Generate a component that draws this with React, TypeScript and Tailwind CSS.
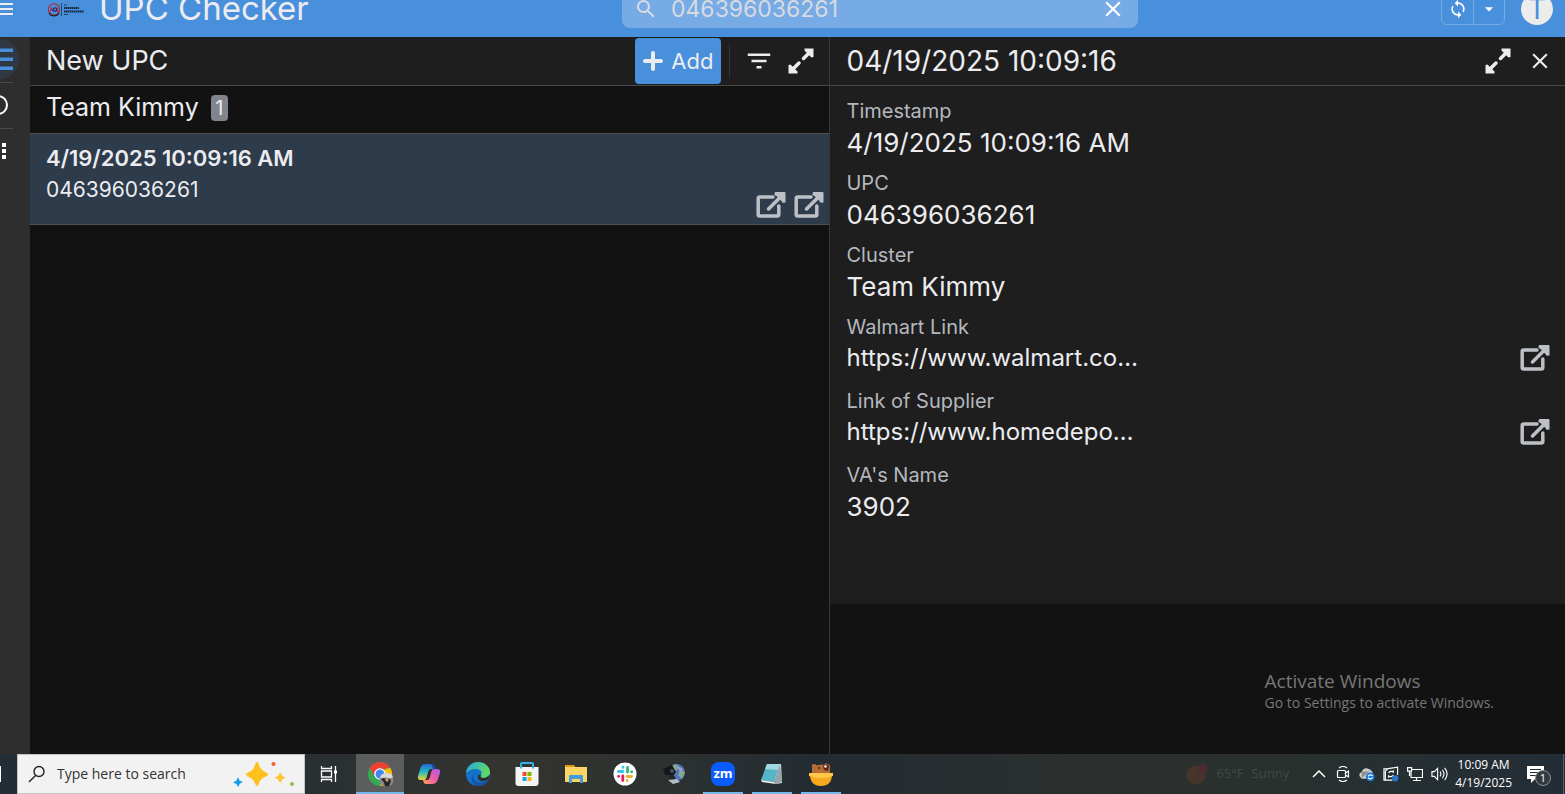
import React from 'react';
import { MdFilterList, MdSearch, MdClose, MdSync, MdArrowDropDown } from 'react-icons/md';
import { clsx } from 'clsx';

interface Field {
  label: string;
  value: string;
  isLink?: boolean;
}

const fields: Field[] = [
  { label: 'Timestamp', value: '4/19/2025 10:09:16 AM' },
  { label: 'UPC', value: '046396036261' },
  { label: 'Cluster', value: 'Team Kimmy' },
  { label: 'Walmart Link', value: 'https://www.walmart.co…', isLink: true },
  { label: 'Link of Supplier', value: 'https://www.homedepo…', isLink: true },
  { label: "VA's Name", value: '3902' },
];

const ExternalIcon = () => (
  <svg width="30" height="28" viewBox="0 0 30 28" fill="none" stroke="currentColor" strokeWidth="3.5">
    <path d="M17 6H3.800Q2.200 6 2.200 7.500v16Q2.200 25 3.800 25h17.400q1.600 0 1.600-1.500V15" strokeLinejoin="round" strokeLinecap="round" />
    <path d="M12.500 18 25 5.500" strokeLinecap="round" />
    <path d="M19 1h9.500q1 0 1 1v9.500l-3 .3L25.500 10 20.500 5 18.300 4z" fill="currentColor" stroke="none" />
  </svg>
);

const ExpandIcon = () => (
  <svg width="26" height="26" viewBox="0 0 26 26">
    <path d="M5 21 11 15M15.500 10.500 21 5" stroke="currentColor" strokeWidth="3.500" strokeLinecap="round" />
    <path d="M16.500.5h9V9l-2 .5-7-7zM9.500 25.500h-9V17l2-.5 7 7z" fill="currentColor" />
  </svg>
);

const PlusIcon = () => (
  <svg width="20" height="20" viewBox="0 0 20 20" fill="none" stroke="currentColor" strokeWidth="4" strokeLinecap="round">
    <path d="M10 2v16M2 10h16" />
  </svg>
);

const Header = () => (
  <header className="flex h-[37px] shrink-0 items-end overflow-hidden bg-[#4890dc] text-[#ececf0]">
    <div className="grid h-14 w-full shrink-0 grid-cols-[622fr_516fr_427fr] items-center">
      <div className="flex items-center">
        <button aria-label="Menu" className="h-[14px] w-[13px]">
          <svg width="13" height="14" viewBox="0 0 13 14" fill="currentColor">
            <path d="M0 1h13v2H0zM0 6h13v2H0zM0 11h13v2H0z" />
          </svg>
        </button>
        <svg className="ml-[34px]" width="38" height="15" viewBox="0 0 38 15">
          <circle cx="7" cy="7.500" r="5.700" fill="none" stroke="#a8304d" strokeWidth="1.200" />
          <path d="M2 11a5.700 5.700 0 0 0 10 0" fill="none" stroke="#20242e" strokeWidth="1.200" />
          <path d="M3 9.500 4.500 6 6 9.500M10.500 5.500v4h2" fill="none" stroke="#b92847" strokeWidth="1.200" />
          <circle cx="8" cy="7.500" r="1.700" fill="none" stroke="#19366f" strokeWidth="1.300" />
          <path d="M14.500 1v13" stroke="#26374d" strokeWidth=".8" />
          <path d="M17 3h3M17 12.500h4" stroke="#253b59" strokeWidth="1.200" />
          <path d="M17 6h15M17 9.500h20" stroke="#1a2a40" strokeWidth="2.200" strokeDasharray="1.600 .4" />
        </svg>
        <h1 className="ml-[14px] pb-[2px] text-[33px] leading-10">UPC Checker</h1>
      </div>
      <div className="flex h-[38px] items-center rounded-lg bg-[#76abe5] px-3">
        <MdSearch size={24} className="shrink-0 text-[#d8dce6]" />
        <input
          aria-label="Search"
          defaultValue="046396036261"
          className="ml-[13px] min-w-0 flex-1 bg-transparent text-[23px] leading-7 text-[#d8dae2] outline-none"
        />
        <button aria-label="Clear search"><MdClose size={26} color="#fff" /></button>
      </div>
      <div className="flex items-center justify-end pr-3">
        <div className="relative flex h-8 rounded-md border border-[#76abe5]">
          <button aria-label="Sync" className="flex w-8 items-center justify-center border-r border-[#76abe5]">
            <MdSync size={20} color="#fff" />
          </button>
          <button aria-label="More sync options" className="flex w-[30px] items-center justify-center">
            <MdArrowDropDown size={20} color="#fff" />
          </button>
          <span className="absolute -top-3 -left-2 size-4 rounded-full bg-[#ffa011]" />
        </div>
        <button aria-label="Account" className="ml-4 flex size-8 items-center justify-center rounded-full bg-[#ececec]">
          <span className="text-[28px] leading-8 text-[#4890dc]">T</span>
        </button>
      </div>
    </div>
  </header>
);

const Sidebar = () => (
  <nav className="flex w-[30px] shrink-0 flex-col items-end overflow-hidden bg-[#2e2e2e] pt-[2px] text-white">
    <button aria-label="List view" className="mr-[11px] flex size-10 shrink-0 items-center justify-end rounded-full bg-[#303943] pr-[6px] text-[#4890dc]">
      <svg width="24" height="22" viewBox="0 0 24 22" fill="currentColor">
        <path d="M0 .5h24v3.500H0zM0 9.500h24V13H0zM0 18.500h24V22H0z" />
      </svg>
    </button>
    <div className="mt-[3px] mr-[17px] h-px w-6 shrink-0 bg-[#4a4a4a]" />
    <button aria-label="Chat" className="mt-[12px] mr-[22px] size-5 shrink-0 rounded-full border-2 border-white" />
    <div className="mt-[13px] mr-[17px] h-px w-6 shrink-0 bg-[#4a4a4a]" />
    <button aria-label="More" className="mt-[9px] mr-[14px] shrink-0">
      <svg width="24" height="26" viewBox="0 0 24 26" fill="currentColor">
        <path d="M10 5h4v4h-4zM10 11h4v4h-4zM10 17h4v4h-4z" />
      </svg>
    </button>
  </nav>
);

const ListPanel = () => (
  <section className="min-w-0 flex-[800] border-r border-[#383838] bg-[#121212]">
    <div className="flex h-[49px] items-center border-b border-[#484848] bg-[#1e1e1e] pr-[15px] pl-4">
      <h2 className="flex-1 text-[27px] leading-8">New UPC</h2>
      <button className="flex h-[46px] items-center gap-2 rounded bg-[#4890dc] px-2 text-[22px] text-[#ececf0]">
        <PlusIcon />
        Add
      </button>
      <div className="ml-2 h-8 w-px bg-[#383838]" />
      <button aria-label="Filter" className="ml-[14px]"><MdFilterList size={30} /></button>
      <button aria-label="Expand list" className="ml-[14px]"><ExpandIcon /></button>
    </div>
    <div className="flex h-12 items-center gap-3 border-b border-[#505050] px-4 pb-1">
      <h3 className="pb-[2px] text-[25px] leading-8">Team Kimmy</h3>
      <span className="flex h-[26px] w-[17px] items-center justify-center rounded bg-[#81858c] text-xl">1</span>
    </div>
    <div className="flex h-[91px] items-end border-b border-[#505050] bg-[#2d3b4b] pr-[5px] pl-4">
      <div className="flex-1 self-start pt-2">
        <p className="text-[22px] leading-8 font-semibold">4/19/2025 10:09:16 AM</p>
        <p className="text-[21px] leading-8">046396036261</p>
      </div>
      <div className="flex gap-2 pb-[5px] text-[#bdc1c6]">
        <a href="#walmart" aria-label="Walmart Link"><ExternalIcon /></a>
        <a href="#supplier" aria-label="Link of Supplier"><ExternalIcon /></a>
      </div>
    </div>
  </section>
);

const DetailPanel = () => (
  <section className="relative min-w-0 flex-[735] bg-[#121212]">
    <div className="flex h-[49px] items-center border-b border-[#484848] bg-[#1e1e1e] pr-3 pl-4">
      <h2 className="flex-1 text-[28px] leading-8">04/19/2025 10:09:16</h2>
      <button aria-label="Expand details"><ExpandIcon /></button>
      <button aria-label="Close details" className="ml-4"><MdClose size={26} /></button>
    </div>
    <dl className="flex flex-col gap-2 bg-[#1e1e1e] pt-[11px] pr-[15px] pb-[79px] pl-4">
      {fields.map((field) => (
        <div key={field.label}>
          <dt className="text-[20px] leading-7 text-[#b4b8be]">{field.label}</dt>
          <dd
            className={clsx(
              'flex items-center justify-between',
              field.isLink ? 'h-[38px] pb-1 text-[24px]' : 'h-9 pb-[2px] text-[26px]'
            )}
          >
            {field.value}
            {field.isLink && (
              <a href="#open" aria-label={`Open ${field.label}`} className="text-[#bdc1c6]"><ExternalIcon /></a>
            )}
          </dd>
        </div>
      ))}
    </dl>
    <div className="absolute right-[71px] bottom-[41px] font-['Open_Sans',sans-serif] text-[#777]">
      <p className="text-[19px] leading-6">Activate Windows</p>
      <p className="text-sm leading-5">Go to Settings to activate Windows.</p>
    </div>
  </section>
);

const ChromeIcon = () => (
  <svg width="28" height="28" viewBox="0 0 28 28">
    <circle cx="14" cy="14" r="12" fill="#34a853" />
    <path d="M3.600 8A12 12 0 0 1 24.400 8L14 9.500 9 17z" fill="#ea4335" />
    <path d="M24.400 8A12 12 0 0 1 14 26l4-9.500 1-7.500z" fill="#fbbc05" />
    <circle cx="14" cy="14" r="5.800" fill="#fff" />
    <circle cx="14" cy="14" r="4.500" fill="#4285f4" />
    <circle cx="20.500" cy="20" r="7" fill="#8d8682" />
    <path d="M14 18q1-5 6.500-5t6.500 4l-3 1.500-4-1z" fill="#d9d9d8" />
    <path d="m15 19 3-1 2 1.500 3-1 2 2-2 6h-4l-1-4z" fill="#25262b" />
    <path d="m19 20 2-2 2 2-2 2z" fill="#c79d82" />
  </svg>
);

const CopilotIcon = () => (
  <svg width="24" height="24" viewBox="0 0 24 24">
    <defs>
      <linearGradient id="cpA" x1="0" y1="0" x2="0" y2="1">
        <stop offset="0" stopColor="#2467dc" /><stop offset=".5" stopColor="#27b9c4" /><stop offset="1" stopColor="#f4d52f" />
      </linearGradient>
      <linearGradient id="cpB" x1="1" y1="0" x2="0" y2="1">
        <stop offset="0" stopColor="#a55af0" /><stop offset=".5" stopColor="#ee5ba5" /><stop offset="1" stopColor="#ffa05c" />
      </linearGradient>
    </defs>
    <path d="M9 2h6q2 0 2.500 2l.8 3H14q-2 0-2.600 2l-2 7q-.6 2-2.400 2H4q-4 0-3-4l2.800-9Q5 2 9 2z" fill="url(#cpA)" />
    <path d="M15 22H9q-2 0-2.500-2L6 18h4q2 0 2.600-2l2-7q.6-2 2.400-2h3q4 0 3 4l-2.800 8Q19 22 15 22z" fill="url(#cpB)" />
    <path d="M14 2h1q2 0 2.500 2l.8 3H16z" fill="#1845a8" />
  </svg>
);

const EdgeIcon = () => (
  <svg width="26" height="26" viewBox="0 0 26 26">
    <defs>
      <linearGradient id="edgeA" x1="0" y1="0" x2="1" y2=".3">
        <stop offset="0" stopColor="#27a3e4" /><stop offset="1" stopColor="#5fdb67" />
      </linearGradient>
    </defs>
    <circle cx="13" cy="13" r="12" fill="#1371c8" />
    <path d="M1 12C2 5 7 1 13 1c7 0 12 5 12 10 0 4-3 6-6 6-3 0-4-1-3-3 2-3-1-6-5-6-5 0-8 2-10 4z" fill="url(#edgeA)" />
    <path d="M8 14c0 7 7 10 15 5-2 4-6 6-10 6-6-1-8-7-5-11z" fill="#1554a5" />
    <path d="M16 14q-2 3 3 3 3 0 5-3v4q-4 3-8 2t-3-6z" fill="#2e3130" />
  </svg>
);

const StoreIcon = () => (
  <svg width="24" height="26" viewBox="0 0 24 26">
    <path d="M6 7V3q0-1 1-1h10q1 0 1 1v4" fill="none" stroke="#33b2e8" strokeWidth="2" />
    <path d="M.5 6h23v16q0 3-3 3h-17q-3 0-3-3z" fill="#f4f4f4" />
    <path d="M6 6v1.500M18 6v1.500" stroke="#33b2e8" strokeWidth="2" />
    <path d="M7.500 11h4v4h-4z" fill="#f04e23" /><path d="M12.500 11h4v4h-4z" fill="#7fba00" />
    <path d="M7.500 16h4v4h-4z" fill="#10a4ed" /><path d="M12.500 16h4v4h-4z" fill="#fdb813" />
  </svg>
);

const ExplorerIcon = () => (
  <svg width="22" height="20" viewBox="0 0 22 20">
    <path d="M0 1h9l2 3H0z" fill="#e09b16" />
    <path d="M0 3h22v15H0z" fill="#fbd567" />
    <path d="M4 19v-7q0-1 1-1h12q1 0 1 1v7h-3v-4H7v4z" fill="#459bd9" />
  </svg>
);

const SlackIcon = () => (
  <svg width="24" height="24" viewBox="0 0 24 24">
    <circle cx="12" cy="12" r="11.500" fill="#fff" />
    <g strokeWidth="2.800" strokeLinecap="round">
      <path d="M5.500 9.500H10M10 5.200v.2" stroke="#36c5f0" />
      <path d="M14.500 5.500V10M18.500 9.800h.2" stroke="#2eb67d" />
      <path d="M14 14.500h4.500M14.200 18.500v.2" stroke="#ecb22e" />
      <path d="M9.800 14v4.500M5.500 14.300h.2" stroke="#e01e5a" />
    </g>
  </svg>
);

const WebcamIcon = () => (
  <svg width="24" height="24" viewBox="0 0 24 24">
    <circle cx="14.500" cy="10.500" r="8.500" fill="#5275bd" />
    <path d="M13 2q4 1 3 5l-4 3-3-4zM18 8l5 2-3 7-4-4z" fill="#81a98b" />
    <path d="M15 4l6 3-3 3z" fill="#a89bd0" />
    <path d="m1 7 9-4 4 7-3 4-8-1z" fill="#15171a" />
    <path d="m6 14 5-2 3 5-4 2z" fill="#23252a" />
    <path d="m6 18 9-1 3 3-7 2z" fill="#b8bdc5" />
    <circle cx="10" cy="9" r="2" fill="#4c535b" />
  </svg>
);

const ZoomIcon = () => (
  <span className="flex size-6 items-center justify-center rounded-lg bg-[#0b5cff] pb-px text-[13px] font-bold text-white">zm</span>
);

const NotepadIcon = () => (
  <svg width="24" height="24" viewBox="0 0 24 24">
    <path d="M7 2h14l1 19-6 1z" fill="#dce3e5" />
    <path d="M7 2h13l-6 18-13-2z" fill="#55b5c7" />
    <path d="M7 2h13l-2 6-13-1z" fill="#a0d9df" />
    <path d="m1 18 13 2 2 2-14-2z" fill="#f1f1ea" />
    <path d="m20 2 2 18-6 2-2-2z" fill="#96a4a8" />
  </svg>
);

const BearIcon = () => (
  <svg width="24" height="25" viewBox="0 0 24 25">
    <path d="M3 12V6q-1-4 2-4 2 0 3 1.500Q12 2 15 3q2-3 4-1 3 1 2 5v5z" fill="#b46c34" />
    <path d="m14 4 4-2 2 2-1 5-4-1z" fill="#5d2520" />
    <path d="m15 4 2-1 1 2-2 1z" fill="#fff" />
    <circle cx="10" cy="6" r="1" fill="#342018" />
    <path d="M1 12h22q0 12-11 12T1 12z" fill="#f5aa1d" />
    <path d="M0 11h24v3q-12 4-24 0z" fill="#ffc848" />
  </svg>
);

const apps = [
  { name: 'Google Chrome', icon: <ChromeIcon />, state: 'active' },
  { name: 'Copilot', icon: <CopilotIcon />, state: 'idle' },
  { name: 'Microsoft Edge', icon: <EdgeIcon />, state: 'idle' },
  { name: 'Microsoft Store', icon: <StoreIcon />, state: 'idle' },
  { name: 'File Explorer', icon: <ExplorerIcon />, state: 'idle' },
  { name: 'Slack', icon: <SlackIcon />, state: 'idle' },
  { name: 'Webcam', icon: <WebcamIcon />, state: 'idle' },
  { name: 'Zoom', icon: <ZoomIcon />, state: 'open' },
  { name: 'Notepad', icon: <NotepadIcon />, state: 'open' },
  { name: 'Bear', icon: <BearIcon />, state: 'open' },
];

const TrayIcons = () => (
  <div className="flex items-center gap-2">
    <svg width="16" height="16" viewBox="0 0 16 16" fill="none" stroke="#fff" strokeWidth="1.500"><path d="m2 11 6-6 6 6" /></svg>
    <svg width="16" height="16" viewBox="0 0 16 16" fill="none" stroke="#fff" strokeWidth="1.200">
      <path d="M3.500 4.500h6q1 0 1 1v5q0 1-1 1h-6q-1 0-1-1v-5q0-1 1-1zM10.500 7l3-2v6l-3-2M4 2q4-3 8 0M4 14q4 3 8 0" />
    </svg>
    <svg width="16" height="16" viewBox="0 0 17 16">
      <path d="M1 11q-2-4 2-5 2-6 8-3 3 1 4 5l-5 5H3z" fill="#c9c9c9" />
      <path d="m3 6 8-1-8 7z" fill="#8d8d8d" />
      <circle cx="12" cy="11" r="4.700" fill="#1677d2" />
      <path d="M9.500 10.500q2-3 5-.5M14.500 11.500q-2 3-5 .5" stroke="#fff" fill="none" strokeWidth="1.200" />
    </svg>
    <svg width="16" height="16" viewBox="0 0 17 16" fill="none" stroke="#fff" strokeWidth="1.200">
      <path d="M15.500 9V.7L4 2.500H1v12h9M5 2.500 2.500 5v9" />
      <path d="M6 7q2-3 5-1V4M11 9q-2 3-5 1v2" />
      <circle cx="13" cy="12.500" r="3.300" fill="#2879cc" stroke="none" />
    </svg>
    <svg width="16" height="16" viewBox="0 0 16 16" fill="none" stroke="#fff" strokeWidth="1.200">
      <path d="M5 3.500h10.500v8H4V6M9.500 11.500v3M6 14.500h8M.6 1.600h4v3.500h-4zM2.500 5v5" />
    </svg>
    <svg width="17" height="16" viewBox="0 0 18 16" fill="none" stroke="#fff" strokeWidth="1.200">
      <path d="M1 5.500h2.500L7 2v12l-3.500-3.500H1zM9.500 5.500q2 2.500 0 5M12 3.500q3.500 4.500 0 9M14.500 1.500q5 6.500 0 13" />
    </svg>
  </div>
);

const Taskbar = () => (
  <footer className="flex h-10 shrink-0 items-center bg-[linear-gradient(90deg,#222d36_0%,#292f32_20%,#34342f_32%,#2f322f_40%,#242c33_52%,#2c302d_72%,#28302f_84%,#232d37_100%)] font-['Open_Sans',sans-serif] text-white">
    <div className="h-4 w-px bg-white" />
    <label className="ml-4 flex h-10 w-72 items-center border border-[#c4c4c4] bg-[#f2f2f2] pr-[9px] pl-[10px]">
      <svg width="18" height="18" viewBox="0 0 18 18" fill="none" stroke="#222" strokeWidth="1.400">
        <circle cx="11" cy="6.500" r="5" /><path d="M7.500 10.500 1 17" />
      </svg>
      <input aria-label="Search" placeholder="Type here to search" className="ml-[11px] min-w-0 flex-1 bg-transparent text-sm placeholder:text-[#333]" />
      <svg width="64" height="28" viewBox="0 0 64 28">
        <path d="M26 2q1.500 0 2 3 1.500 5 7 7.500 4 2 0 4-6 2-7 7-2 5-4 0-1.500-5-7-7-4-2 0-4 5.500-2 7-7.500.5-3 2-3z" fill="#fcc21b" />
        <path d="M49 12q2 5 6 5.500-4 1-6 6-1-5-6-6 5-.5 6-5.500z" fill="#fac432" />
        <path d="m7 17 1.500 3.500L12 22l-3 1.500L7 27l-1.500-3L2 22.500l3.500-2z" fill="#139fe6" />
        <circle cx="42.500" cy="4" r="2" fill="#ef622d" /><circle cx="61" cy="24" r="2" fill="#8cc63f" />
      </svg>
    </label>
    <button aria-label="Task view" className="flex h-10 w-[51px] items-center justify-center pr-1">
      <svg width="18" height="18" viewBox="0 0 18 18" fill="none" stroke="#fff" strokeWidth="1.300">
        <path d="M1.500 1v2.500h10V1M1.500 17v-2.500h10V17M1.500 6h10v6h-10zM15.500 1v16" /><path d="M14 5.500h3v3h-3z" fill="#fff" stroke="none" />
      </svg>
    </button>
    <div className="flex gap-px">
      {apps.map((app) => (
        <button
          key={app.name}
          aria-label={app.name}
          className={clsx('relative flex h-10 w-12 items-center justify-center', app.state === 'active' && 'bg-[#5b5e5d]')}
        >
          {app.icon}
          {app.state !== 'idle' && (
            <span className={clsx('absolute bottom-0 h-[2px] bg-[#76b9ed]', app.state === 'active' ? 'inset-x-0' : 'inset-x-1')} />
          )}
        </button>
      ))}
    </div>
    <div className="ml-auto flex items-center gap-2 text-[13px] text-[#42484a]">
      <svg width="22" height="22" viewBox="0 0 22 22">
        <circle cx="10" cy="12" r="9.500" fill="#46352a" /><circle cx="17" cy="6" r="5" fill="#4b2c2e" />
      </svg>
      <span>65°F</span>
      <span>Sunny</span>
    </div>
    <div className="ml-[22px] flex items-center">
      <TrayIcons />
      <div className="ml-[7px] text-center text-xs leading-[18px]">
        <p>10:09 AM</p>
        <p>4/19/2025</p>
      </div>
      <button aria-label="Notifications" className="relative ml-[15px] h-6 w-6">
        <svg width="17" height="17" viewBox="0 0 17 17">
          <path d="M0 0h17v13H8l-4 4v-4H0z" fill="#fff" /><path d="M3 3.500h11M3 6.500h11M3 9.500h7" stroke="#232d37" strokeWidth="1.200" />
        </svg>
        <span className="absolute top-2 left-2 flex size-4 items-center justify-center rounded-full border border-[#8b9196] bg-[#343b40] text-[11px]">1</span>
      </button>
      <div className="mr-px ml-3 h-10 w-px bg-[#596067]" />
    </div>
  </footer>
);

export default function App() {
  return (
    <div className="flex h-screen flex-col overflow-hidden bg-[#121212] font-['Inter',sans-serif] text-[#ececf0]">
      <Header />
      <main className="flex min-h-0 flex-1">
        <Sidebar />
        <ListPanel />
        <DetailPanel />
      </main>
      <Taskbar />
    </div>
  );
}
